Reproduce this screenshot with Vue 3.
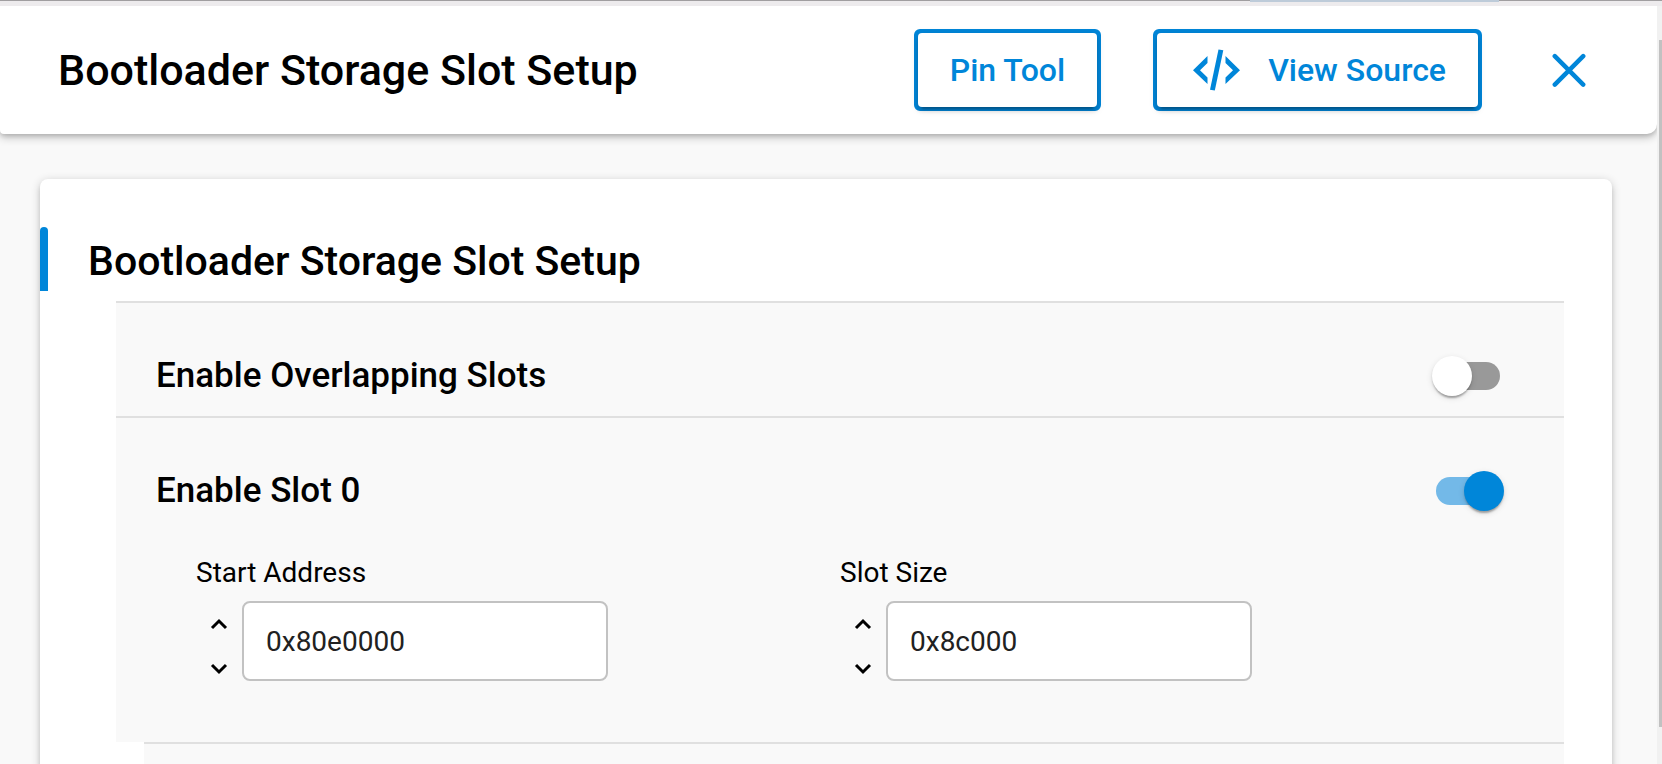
<script setup>
import { reactive } from 'vue'

const overlap = reactive({ on: false })
const slot = reactive({
  on: true,
  fields: [
    { id: 'start-address', label: 'Start Address', value: '0x80e0000' },
    { id: 'slot-size', label: 'Slot Size', value: '0x8c000' }
  ]
})

function step(field, delta) {
  const next = Math.max(0, parseInt(field.value, 16) + delta)
  field.value = '0x' + next.toString(16)
}
</script>

<template>
  <div class="window">
    <div class="edge"><div class="edge-tab"></div></div>
    <div class="body">
      <div class="pane">
        <header class="header">
          <h1 class="header-title">Bootloader Storage Slot Setup</h1>
          <button class="btn" type="button"><span class="btn-face">Pin Tool</span></button>
          <button class="btn" type="button">
            <span class="btn-face">
              <svg class="code-icon" viewBox="0 0 48 42" width="48" height="42" fill="#0086d9" aria-hidden="true">
                <path d="M14.500 7v7L7 21.200l7.500 7.300v6.500L0 21.200z" />
                <path d="M32.500 7v7l7.500 7.200-7.500 7.300v6.500L47 21.200z" />
                <path d="M25.500 0.500l4.800 0.800L21.800 41.500l-4.800-0.800z" />
              </svg>
              View Source
            </span>
          </button>
          <button class="close" type="button" aria-label="Close">
            <svg viewBox="0 0 34 34" width="34" height="34" fill="none" stroke="#0086d9" stroke-width="4.500" stroke-linecap="round" aria-hidden="true">
              <path d="M2.800 3.200l28.400 28.400M31.200 3.200l-28.400 28.400" />
            </svg>
          </button>
        </header>

        <main class="card">
          <div class="card-head">
            <h2 class="card-title">Bootloader Storage Slot Setup</h2>
          </div>

          <div class="sections">
            <section class="section">
              <div class="row">
                <label class="row-label" for="overlap">Enable Overlapping Slots</label>
                <input id="overlap" v-model="overlap.on" class="toggle" type="checkbox" role="switch" />
              </div>
            </section>

            <section class="section">
              <div class="row">
                <label class="row-label" for="slot0">Enable Slot 0</label>
                <input id="slot0" v-model="slot.on" class="toggle" type="checkbox" role="switch" />
              </div>
              <div class="fields">
                <div v-for="field in slot.fields" :key="field.id" class="field">
                  <label class="field-label" :for="field.id">{{ field.label }}</label>
                  <div class="field-control">
                    <div class="stepper">
                      <button class="step" type="button" :aria-label="'Increase ' + field.label" @click="step(field, 4096)">
                        <svg viewBox="0 0 18 12" width="18" height="12" fill="none" stroke="#000" stroke-width="3" aria-hidden="true">
                          <path d="M2 10l7-7 7 7" />
                        </svg>
                      </button>
                      <button class="step" type="button" :aria-label="'Decrease ' + field.label" @click="step(field, -4096)">
                        <svg viewBox="0 0 18 12" width="18" height="12" fill="none" stroke="#000" stroke-width="3" aria-hidden="true">
                          <path d="M2 2l7 7 7-7" />
                        </svg>
                      </button>
                    </div>
                    <input :id="field.id" v-model="field.value" class="text" type="text" />
                  </div>
                </div>
              </div>
            </section>

            <section class="section nested"></section>
          </div>
        </main>
      </div>
      <div class="scroll"><div class="scroll-thumb"></div></div>
    </div>
  </div>
</template>

<style>
body {
  margin: 0;
  background: #f9f9f9;
}
</style>

<style scoped>
.window,
.window * {
  box-sizing: border-box;
}
.window {
  display: flex;
  flex-direction: column;
  height: 100vh;
  overflow: hidden;
  color: #000;
  background: #f9f9f9;
  font-family: Roboto, "Liberation Sans", sans-serif;
}
.edge {
  flex: none;
  height: 6px;
  padding: 0 163px 0 0;
  background: #edebed;
  border-top: 1px solid #a09ea0;
}
.edge-tab {
  width: 249px;
  height: 2px;
  margin-top: -1px;
  margin-left: auto;
  background: #bdcbd9;
}
.body {
  display: flex;
  flex: 1;
  min-height: 0;
}
.pane {
  display: flex;
  flex: 1;
  flex-direction: column;
  min-width: 0;
  overflow: hidden;
}
.header {
  display: flex;
  flex: none;
  align-items: center;
  height: 128px;
  padding: 0 60px 0 58px;
  background: #fff;
  border-radius: 0 0 10px 4px;
  box-shadow: 0 4px 8px rgba(0, 0, 0, 0.2), 0 2px 4px rgba(0, 0, 0, 0.14);
}
.header-title {
  flex: 1;
  margin: 0;
  font-size: 43px;
  font-weight: 500;
  line-height: 48px;
}
.btn {
  height: 82px;
  margin: 0 52px 0 0;
  padding: 0;
  color: #0086d9;
  background: #0086d9;
  border: 4px solid #0086d9;
  border-radius: 6px;
  font-family: inherit;
  font-size: 32px;
  font-weight: 500;
}
.btn-face {
  display: flex;
  align-items: center;
  height: 74px;
  padding: 0 32px;
  background: #fff;
  border-radius: 4px;
  box-shadow: 0 6px 2px -4px rgba(0, 0, 0, 0.2), 0 4px 4px rgba(0, 0, 0, 0.14), 0 2px 10px rgba(0, 0, 0, 0.12);
}
.code-icon {
  margin: 0 27px 0 4px;
}
.close {
  display: flex;
  margin: 0 11px 0 18px;
  padding: 0;
  background: none;
  border: 0;
}
.card {
  flex: none;
  margin: 45px 45px 0 40px;
  padding: 48px 48px 0 0;
  background: #fff;
  border-radius: 8px;
  box-shadow: 0 2px 10px rgba(0, 0, 0, 0.2), 0 4px 4px rgba(0, 0, 0, 0.1);
}
.card-head {
  position: relative;
  height: 64px;
  padding: 10px 0 0 48px;
}
.card-head::before {
  position: absolute;
  inset: 0 auto 0 0;
  width: 8px;
  border-radius: 4px 4px 0 0;
  background: #0086d9;
  content: "";
}
.card-title {
  margin: 0;
  font-size: 41px;
  font-weight: 500;
  line-height: 48px;
}
.sections {
  display: flex;
  flex-direction: column;
  margin: 10px 0 0 76px;
}
.section {
  background: #f9f9f9;
  border-top: 2px solid #e0e0e0;
}
.nested {
  height: 120px;
  margin-left: 28px;
}
.row {
  display: flex;
  align-items: center;
  justify-content: space-between;
  height: 113px;
  padding: 32px 60px 0 40px;
}
.row-label {
  font-size: 35px;
  font-weight: 500;
  line-height: 40px;
}
.toggle {
  position: relative;
  width: 72px;
  height: 40px;
  margin: 0;
  appearance: none;
}
.toggle::before {
  position: absolute;
  inset: 6px 4px;
  border-radius: 14px;
  background: #999;
  content: "";
}
.toggle::after {
  position: absolute;
  top: 0;
  left: 0;
  width: 40px;
  height: 40px;
  border-radius: 50%;
  background: #fff;
  box-shadow: 0 4px 2px -2px rgba(0, 0, 0, 0.2), 0 2px 2px rgba(0, 0, 0, 0.14), 0 2px 6px rgba(0, 0, 0, 0.12);
  content: "";
}
.toggle:checked::before {
  background: #73b9e8;
}
.toggle:checked::after {
  left: 32px;
  background: #0086d9;
}
.fields {
  display: grid;
  grid-template-columns: 1fr 1fr;
  padding: 26px 80px 51px;
}
.field-label {
  display: block;
  font-size: 28px;
  line-height: 32px;
}
.field-control {
  display: flex;
  align-items: flex-start;
  width: 64%;
  margin-top: 12px;
}
.stepper {
  display: flex;
  flex: none;
  flex-direction: column;
  width: 46px;
}
.step {
  display: flex;
  align-items: center;
  justify-content: center;
  height: 45px;
  padding: 0;
  background: none;
  border: 0;
}
.text {
  flex: 1;
  min-width: 0;
  height: 80px;
  padding: 0 22px;
  color: #212121;
  background: #fff;
  border: 2px solid #c2c2c2;
  border-radius: 8px;
  font-family: inherit;
  font-size: 28px;
}
.scroll {
  flex: none;
  width: 5px;
  padding: 34px 0 37px 2px;
  background: #f1f1f1;
}
.scroll-thumb {
  height: 100%;
  background: #c1c1c1;
}
</style>
